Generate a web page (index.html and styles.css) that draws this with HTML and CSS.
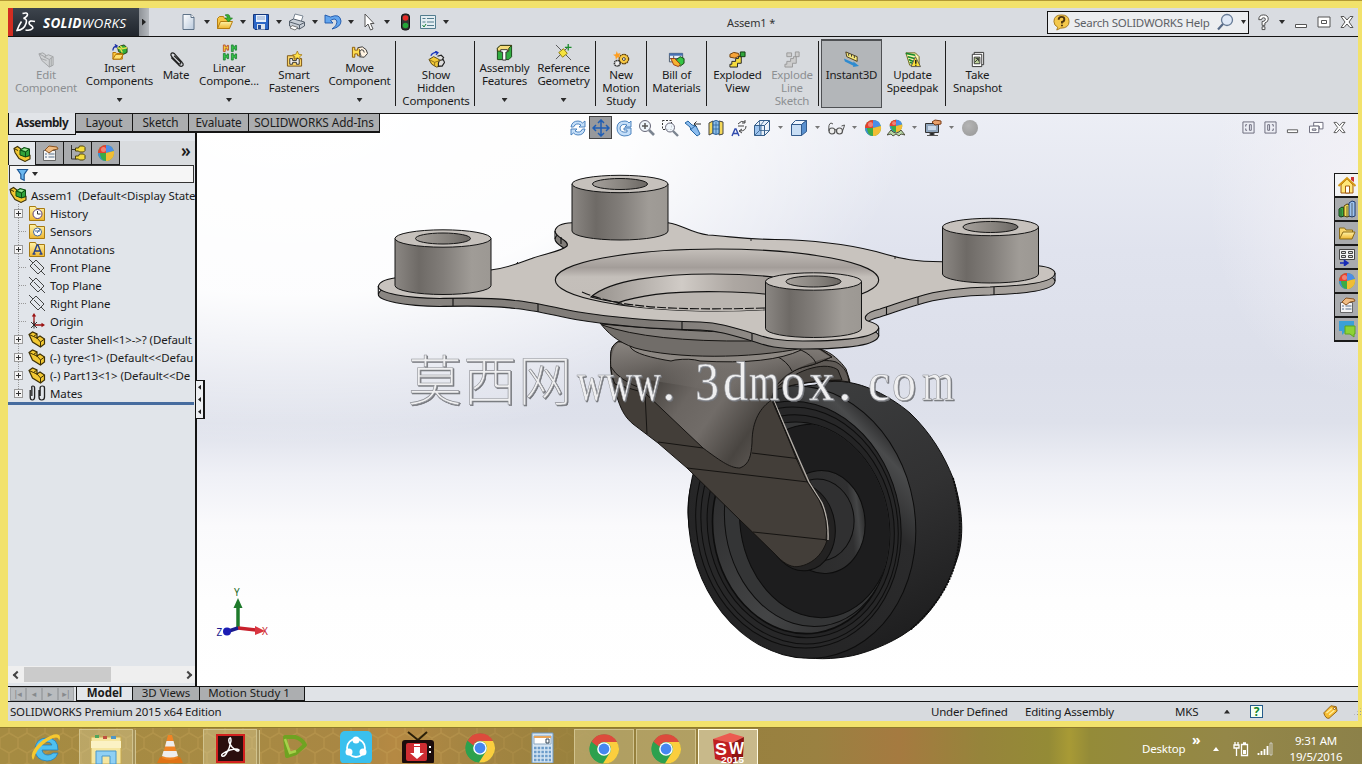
FILE: index.html
```html
<!DOCTYPE html>
<html lang="en">
<head>
<meta charset="utf-8">
<title>Assem1 - SOLIDWORKS</title>
<link rel="stylesheet" href="styles.css">
</head>
<body>
<svg class="defs" width="0" height="0">
  <defs>
    <linearGradient id="paper" x1="0" y1="0" x2="1" y2="1"><stop offset="0" stop-color="#fff"/><stop offset="1" stop-color="#b9c9dc"/></linearGradient>
    <linearGradient id="gold" x1="0" y1="0" x2="0" y2="1"><stop offset="0" stop-color="#fff3a8"/><stop offset="1" stop-color="#eeb52e"/></linearGradient>
    <symbol id="i-new" viewBox="0 0 18 18"><path d="M3 1.500h8l3 3v12H3z" fill="url(#paper)" stroke="#5f7388"/><path d="M11 1.500v3h3" fill="#fff" stroke="#5f7388"/></symbol>
    <symbol id="i-open" viewBox="0 0 18 18"><path d="M1.500 15.500v-10l2-2h4l1 2h5v10z" fill="#f5c543" stroke="#b57d12"/><path d="M1.500 15.500l3-7h12l-3 7z" fill="url(#gold)" stroke="#b57d12"/><path d="M9 2q5-2 5 3h2.500l-4 4-3.500-4h2.500q0-2-2.500-3z" fill="#38b232" stroke="#14721a" stroke-width=".6"/></symbol>
    <symbol id="i-save" viewBox="0 0 18 18"><path d="M1.500 1.500h15v15H3l-1.500-1.500z" fill="#2c67c7" stroke="#16387c"/><path d="M4 2h10v7H4z" fill="#e7f0fc"/><path d="M5 4h8M5 6h8" stroke="#8ea8cf"/><path d="M5 11h8v5.500H5z" fill="#dce3ec"/><path d="M6 12h3v4H6z" fill="#234b95"/></symbol>
    <symbol id="i-print" viewBox="0 0 18 18"><path d="M5 7l2-6 8 2-2 6z" fill="#fff" stroke="#7b8794"/><path d="M1.500 8l4-2 11 3v4l-5 3-10-3z" fill="#c8ced6" stroke="#555f6b"/><path d="M2 9l9.500 3 5-2.500M11.500 12v4" stroke="#555f6b" fill="none"/><path d="M4 12.500l6 2-3 2.500-5-2z" fill="#fff" stroke="#777"/></symbol>
    <symbol id="i-undo" viewBox="0 0 18 18"><path d="M1 2v8h8L6.500 7.500Q12 4 13 9q0 4-5 7 9-2 9-8-1-8-10.500-4z" fill="#62a5ee" stroke="#1d55a8" stroke-width=".9"/></symbol>
    <symbol id="i-cursor" viewBox="0 0 18 18"><path d="M5 1v13l3-3 2.500 6 2.500-1-2.500-5.500H14z" fill="#fff" stroke="#555"/></symbol>
    <symbol id="i-light" viewBox="0 0 18 18"><rect x="5.500" y="1" width="8" height="16" rx="3" fill="#333" stroke="#111"/><circle cx="9.500" cy="5" r="2.800" fill="#e52c27"/><circle cx="9.500" cy="12.500" r="2.800" fill="#25a438"/></symbol>
    <symbol id="i-list" viewBox="0 0 18 18"><path d="M1.500 2.500h15v13h-15z" fill="#e4eef2" stroke="#527c8e"/><path d="M8 5.500h7M8 9h7M8 12.500h7M3.500 5.500h3M3.500 9h3" stroke="#527c8e"/><path d="M3.500 12l1.500 2 2-3" stroke="#168337" fill="none"/></symbol>
    <symbol id="i-help" viewBox="0 0 18 18"><path d="M4 6q0-5 5-5t5 4.500q0 3-3.500 4V12h-3V8q3.500 0 3.500-2.500Q11 4 9 4T7 6zM7.500 13.500h3v3h-3z" fill="#fff" stroke="#444"/></symbol>
    <symbol id="i-ball" viewBox="0 0 18 18"><circle cx="9" cy="9" r="8" fill="#47a94a"/><path d="M9 9V1a8 8 0 0 1 7.800 6z" fill="#4b8de8"/><path d="M9 9V1a8 8 0 0 0-8 8z" fill="#e6402f"/><path d="M9 9H1a8 8 0 0 0 8 8z" fill="#3a8fd8"/><path d="M9 9l7.800-2A8 8 0 0 1 9 17z" fill="#f1bd34"/><path d="M9 9H3q0 7 6 8z" fill="#3dab45"/><circle cx="6.500" cy="5.500" r="2.500" fill="#fff" opacity=".35"/></symbol>
    <symbol id="i-asm" viewBox="0 0 18 18"><path d="M1 3.500L4.500 1.500 8 4v5l4 2.500 5-1v3.500l-5 2.500-6-3-4-6z" fill="#f2c832" stroke="#3c2f05" stroke-width="1.100"/><path d="M7 5L11 2.500l5.500 1.500v6.500L12.500 12 7 10z" fill="#2fa23a" stroke="#0d4a14"/><path d="M7 5l5.500 2 4-3M12.500 7v5" stroke="#0d4a14" fill="none"/><path d="M9 4.700l2.500-1.300 3.500 1-2.500 1.500z" fill="#a6e79b"/><path d="M1 3.500l4 2" stroke="#3c2f05"/></symbol>
    <symbol id="i-edit" viewBox="0 0 18 18"><path d="M1 3l4-1 3 2v5l3 3" fill="#d0d2d4" stroke="#a2a4a6"/><path d="M1 3l3 7 8 7 4-2V6l-5-2-4 2z" fill="#d0d2d4" stroke="#a2a4a6"/><path d="M12 17V9L6 6M12 9l4-3M14 7v9M3 8l6 2" fill="none" stroke="#a2a4a6"/></symbol>
    <symbol id="i-insert" viewBox="0 0 18 18"><path d="M7 4l3-2 4-1 3 3v5l-4 2-5-3z" fill="#31ae3a" stroke="#223d10"/><path d="M7 4l3 1 2 4M10 2l2 3 5-1" stroke="#e7e14a" fill="none" stroke-width="1.500"/><path d="M2 16V9h3l1 1h6v6z" fill="#ffc83c" stroke="#b07000"/><path d="M2 16l3-5h8l-3 5z" fill="#ffe071" stroke="#b07000"/><path d="M2 7q0-4 4-5M4 .500L6.500 2 5 4" stroke="#1c30a5" fill="none" stroke-width="1.300"/></symbol>
    <symbol id="i-clip" viewBox="0 0 18 18"><path d="M3.500 7l8 8q3 2.500 4.500 0 .5-1.500-1-3L7 3Q4.500 1 3.200 3q-.8 1.500 1 3.300l7 7q1.500 1 2.200 0 .5-1-.6-2L6.500 5" fill="none" stroke="#222" stroke-width="1.300"/></symbol>
    <symbol id="i-linear" viewBox="0 0 18 18"><path d="M2.500 1h2v2h2V1.500h1.500v5H6.500V5h-2v3h-2z" fill="#f5d93a" stroke="#b1361d" stroke-width=".8"/><path d="M11 1h2v2h2V1.500h1.500v5H15V5h-2v3h-2zM2.500 10h2v2h2v-1.500h1.500v5H6.500V14h-2v3h-2zM11 10h2v2h2v-1.500h1.500v5H15V14h-2v3h-2z" fill="#35c546" stroke="#127a2b" stroke-width=".8"/></symbol>
    <symbol id="i-smart" viewBox="0 0 18 18"><path d="M1.500 5h7v3h8v8h-15z" fill="#fbd669" stroke="#7b5411"/><path d="M4 8h3v2h4V8h3v6h-3v-2H7v2H4z" fill="#eee" stroke="#333"/><path d="M12 0l1.500 3.500L17 4l-2.500 2 .5 3-3-2-3 2 .5-3L7 4l3.500-.5z" fill="#ffe34a" stroke="#9c6a09" stroke-width=".7"/></symbol>
    <symbol id="i-move" viewBox="0 0 18 18"><path d="M1.500 3.500h2.500v3h3v-2h2v8H7v-2H4v3.500H1.500z" fill="#fddc4f" stroke="#8b5a0a"/><path d="M7 4l5-1 4 3 1.500 4-3.500 4-5-.5q3-1.500 1-2.500Q8 8 11 6q3 0 3 3" fill="#fff3e2" stroke="#333"/></symbol>
    <symbol id="i-show" viewBox="0 0 18 18"><path d="M1 9l5-3 4 2 3 2v6l-4 1-5-3z" fill="#f3cb38" stroke="#59450c"/><path d="M10 5.500l4-1 2.500 2.500-2 3M12 10l4-1 1.500 3-2.500 4-4 0v-3z" fill="#ddd" stroke="#222" stroke-width="1.200"/><path d="M3 5q2-4 7-3.500M7.500 0l3 1.800L8.500 4" stroke="#1c37ba" stroke-width="1.400" fill="none"/><path d="M1 9l6 3 6-2M7 12v4" stroke="#8c6d16" fill="none"/></symbol>
    <symbol id="i-feat" viewBox="0 0 18 18"><path d="M1.500 4.500l3-3h12v12l-3 3h-12z" fill="#31ad41" stroke="#174617"/><path d="M1.500 4.500l3-3h12l-3 3v3h-12z" fill="#f4dc7a" stroke="#3b3710"/><path d="M5 6h7v2.500h-1.500V17H7V8.500H5z" fill="#fff" stroke="#333"/></symbol>
    <symbol id="i-ref" viewBox="0 0 18 18"><path d="M1 1l16 16M1 16L14 3" stroke="#333" stroke-width=".8"/><path d="M4 9l5-4 4 5-5 4z" fill="#f5e33d" stroke="#8d7a0c"/><path d="M14 0v7M10.500 3.500h7" stroke="#1b8c2c" stroke-width="1.400"/></symbol>
    <symbol id="i-motion" viewBox="0 0 18 18"><circle cx="11.500" cy="8.500" r="5" fill="#f8c945" stroke="#5e3f06" stroke-width="1.400" stroke-dasharray="2 .6"/><circle cx="4.500" cy="13" r="3" fill="#eee" stroke="#333" stroke-width="1.600" stroke-dasharray="1.500 .5"/><circle cx="11.500" cy="8.500" r="1.500" fill="#fff" stroke="#333"/><path d="M4 0l1 3 3-1-1.500 3L8 7l-3-.5L3 9l-.5-3.500L0 4l3-.5z" fill="#ff9e1f"/></symbol>
    <symbol id="i-bom" viewBox="0 0 18 18"><path d="M1.500 2.500h14v9h-14z" fill="#e7eef7" stroke="#456"/><path d="M1.500 2.500h14v2.500h-14z" fill="#4871b3"/><path d="M2 8h13M6 5v7" stroke="#456"/><path d="M9 9l4-3 4 2v5l-4 3-4-2z" fill="#35c545" stroke="#173f12"/><path d="M3 8l4 0 6 6-2 2.500-5-2z" fill="#f5b22f" stroke="#9b3813"/></symbol>
    <symbol id="i-expl" viewBox="0 0 18 18"><path d="M1 3.500l4-2 5 1 1 3-5 2-5-1z" fill="#f6a338" stroke="#6d3d05"/><path d="M3 11h4V8h3V6h3v7H9v4H1v-3h2z" fill="#f5dc3e" stroke="#222"/><path d="M12 1h5v5h-5z" fill="#2fa63a" stroke="#123c10"/></symbol>
    <symbol id="i-expg" viewBox="0 0 18 18"><path d="M3 2h5v4H3zM12 1h4v5h-4zM3 11h4V8h3V6h3v7H9v4H1v-3h2z" fill="#ccc" stroke="#999"/></symbol>
    <symbol id="i-inst" viewBox="0 0 18 18"><path d="M3 1l12 5v5L4 6z" fill="#f7ea7d" stroke="#4b3a18"/><path d="M6 2.500v2.500M9 3.500V6M12 5v2.500" stroke="#333"/><path d="M1 8l10 4.500 0-1.500 6 5-6.500 1 .5-1.500L2 11z" fill="#2e8bd0"/></symbol>
    <symbol id="i-upd" viewBox="0 0 18 18"><path d="M2 2h10l4 4v9H6z" fill="#fff6ac" stroke="#6a6417"/><path d="M2 2.500l10 2M4 6l7 2M5 9l5 2M6 12l3 1" stroke="#178a2d" stroke-width="1.700"/><path d="M12 6l5.500 10.500h-10z" fill="#f9e13b" stroke="#555"/><path d="M12.500 9.500v4M12.500 14.500v1" stroke="#111" stroke-width="1.500"/></symbol>
    <symbol id="i-snap" viewBox="0 0 18 18"><path d="M5.500 1.500h10v13h-10z" fill="#fff" stroke="#333"/><path d="M3.500 3.500h10v13h-10z" fill="#fff" stroke="#333"/><path d="M5.500 6.500h6v7h-6z" fill="#c1d69d" stroke="#333"/><path d="M6 12l4-4M7 8h3v3" stroke="#333" fill="none"/></symbol>
    <symbol id="i-filter" viewBox="0 0 18 18"><path d="M3 3h12l-4 6v7l-4-2V9z" fill="#6bb8f0" stroke="#1c5593" stroke-width="1.400"/></symbol>
    <symbol id="i-prop" viewBox="0 0 18 18"><path d="M2.500 6.500h12v10h-12z" fill="#f4f4f4" stroke="#666"/><path d="M4 10h2M4 13h2M7.500 10h6M7.500 13h6" stroke="#57718c"/><path d="M4 6l4-4 8 1 1 2-5 1-4 3z" fill="#f0bd83" stroke="#8b5421"/></symbol>
    <symbol id="i-conf" viewBox="0 0 18 18"><path d="M2.500 1v14h5M2.500 5.500h5" stroke="#333" fill="none"/><path d="M6.500 4h3l1-2h4l1.500 1.500v3L14.500 8h-4l-1-1h-3zM6.500 12h3l1-2h4l1.500 1.500v3L14.500 16h-4l-1-1h-3z" fill="#f5dc3e" stroke="#4c420a"/></symbol>
    <symbol id="i-fold" viewBox="0 0 18 18"><path d="M1.500 2.500h6l1 2h8v12h-15z" fill="url(#gold)" stroke="#a77a12"/></symbol>
    <symbol id="i-folder" viewBox="0 0 18 18"><path d="M1.500 15v-11h5l1.500 2h6.500v3" fill="#f9d66b" stroke="#8a6a14"/><path d="M1.500 15l3.500-7h12l-3 7z" fill="url(#gold)" stroke="#8a6a14"/></symbol>
    <symbol id="i-hist" viewBox="0 0 18 18"><use href="#i-fold"/><circle cx="9.500" cy="10" r="4.500" fill="#fff" stroke="#5a3d7c"/><path d="M9.500 7v3h3" stroke="#333" fill="none"/></symbol>
    <symbol id="i-sens" viewBox="0 0 18 18"><use href="#i-fold"/><circle cx="9.500" cy="10" r="4" fill="#fff" stroke="#44689b"/><path d="M7 9h5M9 11l3-4" stroke="#44689b"/></symbol>
    <symbol id="i-anno" viewBox="0 0 18 18"><use href="#i-fold"/><path d="M5.500 14L9 5h1l3.500 9M7 11h5M4.500 14h3M11.500 14h3" stroke="#26418c" fill="none" stroke-width="1.400"/></symbol>
    <symbol id="i-plane" viewBox="0 0 18 18"><path d="M2 8l6-6 8 8-6 6zM1 1l4 4M13 13l4 4M6 6l6 6" fill="none" stroke="#333" stroke-width=".9"/></symbol>
    <symbol id="i-orig" viewBox="0 0 18 18"><path d="M6 13V3M6 13h9" stroke="#9a1111" stroke-width="1.300"/><path d="M6 1L3.800 4.500h4.400zM17 13l-3.500-2.200v4.400z" fill="#9a1111"/><path d="M3 10l6 6M9 10l-6 6M6 9.500v7" stroke="#222" stroke-width=".9"/></symbol>
    <symbol id="i-part" viewBox="0 0 18 18"><path d="M1 4.500L4.500 2l4.500 2v4l3-2 4.500 3v5l-4 3L4.500 12z" fill="#f2c832" stroke="#3f3105" stroke-width="1.200"/><path d="M1 4.500l4.500 2L9 4M5.500 6.500L9 8l3.500 4 4-3M12.500 12v5" fill="none" stroke="#3f3105"/></symbol>
    <symbol id="i-mates" viewBox="0 0 18 18"><path d="M2 6v7q0 3 2 3t2-3V4q0-2-1.500-2T3.500 4v8M10 6v7q0 3 2.500 3t2.500-3V4q0-2-2-2t-2 2v8" transform="scale(1.100 1)" fill="none" stroke="#222" stroke-width="1.200"/></symbol>
    <symbol id="i-refresh" viewBox="0 0 18 18"><path d="M2 8q1-6 7-6 3 0 4.500 2L16 2v6h-6l2-2Q7 3 4.500 8zM16 10q-1 6-7 6-3 0-4.500-2L2 16v-6h6l-2 2q5 3 7.500-2z" fill="#c4def8" stroke="#3e79b9" stroke-width=".9"/></symbol>
    <symbol id="i-pan" viewBox="0 0 18 18"><path d="M9 1v16M1 9h16M6 4l3-3 3 3M6 14l3 3 3-3M4 6L1 9l3 3M14 6l3 3-3 3" fill="none" stroke="#1f5eb4" stroke-width="1.500"/></symbol>
    <symbol id="i-rot" viewBox="0 0 18 18"><path d="M9 17q-7-1-7-8t8-7q3 0 4 2l2-2v6h-6l2-2Q6 4 5 9q0 5 7 4v-2H9V9h7v6q-2 2-7 2z" fill="#c4def8" stroke="#3e79b9" stroke-width=".9"/></symbol>
    <symbol id="i-zoom" viewBox="0 0 18 18"><circle cx="7" cy="7" r="5.500" fill="#eef5fb" stroke="#667"/><path d="M11 11l5 5" stroke="#7b8490" stroke-width="2.600"/><path d="M7 4v6M4 7h6" stroke="#555" stroke-width="1.500"/></symbol>
    <symbol id="i-zoomr" viewBox="0 0 18 18"><path d="M1.500 1.500h9v9h-9z" fill="none" stroke="#333" stroke-dasharray="2 1.500"/><circle cx="9" cy="8.500" r="4.500" fill="#eef5fb" fill-opacity=".8" stroke="#667"/><path d="M12 12l5 5" stroke="#7b8490" stroke-width="2.400"/></symbol>
    <symbol id="i-prev" viewBox="0 0 18 18"><path d="M1 4l3-2 4 4 4 1 4 8-3 2-6-6-1-3z" fill="#8cbdf0" stroke="#2667a5"/><path d="M6 11l5-4" stroke="#2667a5"/><path d="M17 5h-7M12.500 2.500L10 5l2.500 2.500" stroke="#333" fill="none"/></symbol>
    <symbol id="i-sect" viewBox="0 0 18 18"><path d="M2 4l4-2v12l-4 2zM12 2l4 1v12l-4 1z" fill="#f5d95a" stroke="#444"/><path d="M6 2.500q3-2 6 0v12q-3 2-6 0z" fill="#8fbfe9" stroke="#245c96"/><path d="M9 3v12M6 6h6M6 10h6" stroke="#245c96" stroke-width=".7"/></symbol>
    <symbol id="i-aview" viewBox="0 0 18 18"><path d="M2 17l3-7h1l3 7M3 14.500h5" stroke="#304bad" fill="none" stroke-width="1.400"/><path d="M8 5q3-4 7-2M15 1v3h-3M16 7q0 5-6 5M12 10l-3 2 3 2M8 7h6" fill="none" stroke="#444"/></symbol>
    <symbol id="i-cubew" viewBox="0 0 18 18"><path d="M1.500 6.500h10v10h-10zM1.500 6.500l5-5h10l-5 5M16.500 1.500v10l-5 5" fill="#e7f0fa" stroke="#345e8a"/><path d="M2 7h6v9H2z" fill="#9cc3ee"/><path d="M6.500 1.500v10h10M6.500 11.500l-5 5M8 7v9M11 2l-4 5" fill="none" stroke="#345e8a" stroke-width=".8"/></symbol>
    <symbol id="i-cube" viewBox="0 0 18 18"><path d="M1.500 5.500h10v11h-10z" fill="#c8def5" stroke="#335b8d"/><path d="M1.500 5.500l4-4h11l-5 4z" fill="#eef6ff" stroke="#335b8d"/><path d="M16.500 1.500v11l-5 4v-11z" fill="#5990cf" stroke="#335b8d"/></symbol>
    <symbol id="i-glass" viewBox="0 0 18 18"><circle cx="5" cy="12" r="3" fill="#eee" stroke="#555" stroke-width="1.200"/><circle cx="12.500" cy="12" r="3" fill="#eee" stroke="#555" stroke-width="1.200"/><path d="M2 12Q1 5 4 4l2 1M15.500 12q2-5 2-6l-3 1M8 11q1-1 2 0" stroke="#555" fill="none"/></symbol>
    <symbol id="i-scene" viewBox="0 0 18 18"><use href="#i-ball" x="2" y="0" width="14" height="14"/><path d="M0 16l4-5 2 2 3 1 3-1 2-2 4 5-4-1-2 2-3-2-3 2-2-2z" fill="#b7d6a5" stroke="#443" stroke-width=".9"/></symbol>
    <symbol id="i-mon" viewBox="0 0 18 18"><path d="M1.500 4.500h13v9h-13z" fill="#90a5bc" stroke="#333"/><path d="M4 7h8v4H4z" fill="#c9d8e9"/><path d="M6 14h4v2H6zM3 16.500h11" stroke="#555"/><path d="M8 3l3-2 6 1v3l-6 1z" fill="#e9a16b" stroke="#7c3e18"/></symbol>
    <symbol id="i-home" viewBox="0 0 18 18"><path d="M3 9v8h12V9L9 3z" fill="#ffe77a" stroke="#a35b0d"/><path d="M.500 10L9 2l8.500 8" fill="none" stroke="#d59a17" stroke-width="2"/><path d="M7.500 10h4v7h-4z" fill="#fff" stroke="#a35b0d"/><path d="M13 1h3v5l-3-2z" fill="#c33"/></symbol>
    <symbol id="i-books" viewBox="0 0 18 18"><path d="M1 9l3-2 2 1v8l-3 1-2-1z" fill="#38ac46" stroke="#123e17"/><path d="M6 6l3-2 3 1v11l-3 1-3-1z" fill="#f2dc51" stroke="#59430d"/><path d="M11 3l3-2 3 1v14l-3 1-3-1z" fill="#9cc3f0" stroke="#1d3a6f"/><path d="M3 9v8M9 6v11M14 3v14" stroke="#333" stroke-width=".7"/></symbol>
    <symbol id="i-view" viewBox="0 0 18 18"><path d="M1.500 1.500h15v10h-15z" fill="#f4f4f4" stroke="#444"/><path d="M3.500 3.500h4v2h-4zM3.500 7.500h4v2h-4zM10.500 3.500h4v2h-4zM10.500 7.500h4v2h-4z" fill="#ddd" stroke="#444"/><path d="M2 15h6M6.500 12.500l3.500 2.500-3.500 2.500z" stroke="#172ab7" stroke-width="1.500" fill="#172ab7"/></symbol>
    <symbol id="i-forum" viewBox="0 0 18 18"><path d="M1 1h15v10H8l-4 4v-4H1z" fill="#3ba0d8"/><path d="M7 6h10v8h-1v3l-4-3H7z" fill="#8dd334" stroke="#5da520"/></symbol>
    <symbol id="i-dual" viewBox="0 0 14 14"><path d="M1 1h12v12H1zM5.500 4H4v2M5.500 10H4V8M8 4h2v6H8z" fill="none" stroke="#667" stroke-width="1"/></symbol>
    <symbol id="i-dual2" viewBox="0 0 14 14"><path d="M1 1h12v12H1zM4 4h2v6H4zM8.500 4H10v2M8.500 10H10V8" fill="none" stroke="#667" stroke-width="1"/></symbol>
    <symbol id="i-min" viewBox="0 0 14 14"><path d="M1.500 9.500h11v3h-11z" fill="#fff" stroke="#555"/></symbol>
    <symbol id="i-max" viewBox="0 0 14 14"><path d="M1 2h12v10H1zM4.500 5.500h5v3h-5z" fill="#fff" stroke="#555"/></symbol>
    <symbol id="i-rest" viewBox="0 0 16 14"><path d="M5.500 1.500h10v7h-4v-3h-6z" fill="#fff" stroke="#667"/><path d="M1 5.500h10v7H1zM4 8.500h4v1.500H4z" fill="#fff" stroke="#667"/></symbol>
    <symbol id="i-close" viewBox="0 0 14 14"><path d="M1 1.500h3l3 3.500 3-3.500h3L9 7l4 5.500h-3L7 9l-3 3.500H1L5 7z" fill="#fff" stroke="#555"/></symbol>
    <symbol id="t-chrome" viewBox="0 0 30 30"><circle cx="15" cy="15" r="14.500" fill="#2da14e"/><path d="M2.500 7.700A14.500 14.500 0 0 1 28 8H15a7 7 0 0 0-6.500 4.500z" fill="#dd4b3c"/><path d="M2.500 7.700L9 18a7 7 0 0 0 6 4l-3.500 7A14.500 14.500 0 0 1 2.500 7.700z" fill="#2da14e"/><path d="M28 8H15q7 1 7 7 0 3-2 5l-6 9.500A14.500 14.500 0 0 0 28 8z" fill="#fbce3e"/><circle cx="15" cy="15" r="6.800" fill="#fff"/><circle cx="15" cy="15" r="5.400" fill="#4587f0"/></symbol>
  </defs>
</svg>

<div class="window">
  <header class="titlebar">
    <div class="brand">
      <svg class="brand-mark" viewBox="0 0 20 21"><path d="M6.500 1.500q5-1.500 5 1 0 2-4 4 4 0 2.500 5Q8 18 1 18.500 3 13 5.500 9.500M19 9.500q-6-1.500-6 1.500 0 1.500 2 2.500 2.500 1.500 1.500 3-2 2.500-7 1.500" fill="none" stroke="#fff" stroke-width="1.600"/></svg>
      <span class="brand-text"><b>SOLID</b>WORKS</span>
    </div>
    <div class="brand-arrow"><i class="right"></i></div>
    <nav class="quick">
      <span><svg><use href="#i-new"/></svg><i class="down"></i></span>
      <span><svg><use href="#i-open"/></svg><i class="down"></i></span>
      <span><svg><use href="#i-save"/></svg><i class="down"></i></span>
      <span><svg><use href="#i-print"/></svg><i class="down"></i></span>
      <span><svg><use href="#i-undo"/></svg><i class="down"></i></span>
      <span><svg><use href="#i-cursor"/></svg><i class="down"></i></span>
      <span class="tight"><svg><use href="#i-light"/></svg></span>
      <span><svg><use href="#i-list"/></svg><i class="down"></i></span>
    </nav>
    <div class="doc-title">Assem1 *</div>
    <div class="search">
      <svg class="bubble" viewBox="0 0 18 18"><path d="M9 1q8 0 8 7t-9 7l-4 2 1-3Q1 12 1 8q0-7 8-7z" fill="#f4c84b" stroke="#a5781b"/><path d="M6 6q0-3 3-3t3 2.500Q12 8 9.500 8.500V10M9.500 11.500V13" fill="none" stroke="#4d3510" stroke-width="2"/></svg>
      <span>Search SOLIDWORKS Help</span>
      <svg class="lens" viewBox="0 0 18 18"><circle cx="11" cy="7" r="5.500" fill="#dfe9f7" stroke="#667b96" stroke-width="1.300"/><path d="M7 11l-5 5.500" stroke="#566a87" stroke-width="2.200"/></svg>
      <i class="down"></i>
    </div>
    <div class="sysbtns">
      <svg class="q"><use href="#i-help"/></svg><i class="down"></i>
      <svg><use href="#i-min"/></svg><svg><use href="#i-max"/></svg><svg><use href="#i-close"/></svg>
    </div>
  </header>

  <section class="ribbon">
    <div class="cmd off"><svg><use href="#i-edit"/></svg>Edit<br>Component</div>
    <div class="cmd drop"><svg><use href="#i-insert"/></svg>Insert<br>Components<i class="down"></i></div>
    <div class="cmd"><svg><use href="#i-clip"/></svg>Mate</div>
    <div class="cmd drop"><svg><use href="#i-linear"/></svg>Linear<br>Compone...<i class="down"></i></div>
    <div class="cmd"><svg><use href="#i-smart"/></svg>Smart<br>Fasteners</div>
    <div class="cmd drop"><svg><use href="#i-move"/></svg>Move<br>Component<i class="down"></i></div>
    <div class="sep"></div>
    <div class="cmd"><svg><use href="#i-show"/></svg>Show<br>Hidden<br>Components</div>
    <div class="sep"></div>
    <div class="cmd drop"><svg><use href="#i-feat"/></svg>Assembly<br>Features<i class="down"></i></div>
    <div class="cmd drop"><svg><use href="#i-ref"/></svg>Reference<br>Geometry<i class="down"></i></div>
    <div class="sep"></div>
    <div class="cmd"><svg><use href="#i-motion"/></svg>New<br>Motion<br>Study</div>
    <div class="sep"></div>
    <div class="cmd"><svg><use href="#i-bom"/></svg>Bill of<br>Materials</div>
    <div class="sep"></div>
    <div class="cmd"><svg><use href="#i-expl"/></svg>Exploded<br>View</div>
    <div class="cmd off"><svg><use href="#i-expg"/></svg>Explode<br>Line<br>Sketch</div>
    <div class="sep"></div>
    <div class="cmd pressed"><svg><use href="#i-inst"/></svg>Instant3D</div>
    <div class="cmd"><svg><use href="#i-upd"/></svg>Update<br>Speedpak</div>
    <div class="sep"></div>
    <div class="cmd"><svg><use href="#i-snap"/></svg>Take<br>Snapshot</div>
  </section>

  <main class="work">
    <div class="cmd-tabs">
      <span class="active">Assembly</span><span>Layout</span><span>Sketch</span><span>Evaluate</span><span>SOLIDWORKS Add-Ins</span>
    </div>

    <aside class="panel">
      <div class="panel-tabs">
        <span class="active"><svg><use href="#i-asm"/></svg></span><span><svg><use href="#i-prop"/></svg></span><span><svg><use href="#i-conf"/></svg></span><span><svg><use href="#i-ball"/></svg></span>
        <b>»</b>
      </div>
      <div class="filter"><svg><use href="#i-filter"/></svg><i class="down"></i></div>
      <div class="root"><svg><use href="#i-asm"/></svg>Assem1&nbsp; (Default&lt;Display State</div>
      <ul class="tree">
        <li class="plus"><svg><use href="#i-hist"/></svg>History</li>
        <li><svg><use href="#i-sens"/></svg>Sensors</li>
        <li class="plus"><svg><use href="#i-anno"/></svg>Annotations</li>
        <li><svg><use href="#i-plane"/></svg>Front Plane</li>
        <li><svg><use href="#i-plane"/></svg>Top Plane</li>
        <li><svg><use href="#i-plane"/></svg>Right Plane</li>
        <li><svg><use href="#i-orig"/></svg>Origin</li>
        <li class="plus"><svg><use href="#i-part"/></svg>Caster Shell&lt;1&gt;-&gt;? (Default</li>
        <li class="plus"><svg><use href="#i-part"/></svg>(-) tyre&lt;1&gt; (Default&lt;&lt;Defau</li>
        <li class="plus"><svg><use href="#i-part"/></svg>(-) Part13&lt;1&gt; (Default&lt;&lt;De</li>
        <li class="plus"><svg><use href="#i-mates"/></svg>Mates</li>
      </ul>
      <div class="rollback"></div>
      <div class="hscroll"><i class="chev l"></i><div class="thumb"></div><i class="chev r"></i></div>
    </aside>

    <div class="viewport">
      <svg class="scene" viewBox="197 114 1161 572">
        <defs>
          <linearGradient id="cyl" x1="0" x2="1" y1="0" y2="0"><stop offset="0" stop-color="#8b8783"/><stop offset=".25" stop-color="#6e6a66"/><stop offset=".5" stop-color="#817d79"/><stop offset=".8" stop-color="#a09c97"/><stop offset="1" stop-color="#9c9893"/></linearGradient>
          <linearGradient id="hole" x1="0" x2="1" y1="0" y2="0"><stop offset="0" stop-color="#a5a09b"/><stop offset=".6" stop-color="#85817c"/><stop offset="1" stop-color="#6b6763"/></linearGradient>
          <linearGradient id="dish" x1="0" x2="0" y1="0" y2="1"><stop offset="0" stop-color="#c4bfba"/><stop offset=".3" stop-color="#a39d99"/><stop offset=".45" stop-color="#c4bfba"/><stop offset="1" stop-color="#c2bdb8"/></linearGradient>
          <linearGradient id="dish2" x1="0" x2="1" y1="0" y2="0"><stop offset="0" stop-color="#96918c"/><stop offset=".35" stop-color="#d0cbc6"/><stop offset=".55" stop-color="#ada7a2"/><stop offset="1" stop-color="#88837f"/></linearGradient>
          <linearGradient id="side" x1="0" x2="1" y1="0" y2="0"><stop offset="0" stop-color="#8a8682"/><stop offset=".4" stop-color="#7d7975"/><stop offset=".7" stop-color="#a09b97"/><stop offset="1" stop-color="#a7a29d"/></linearGradient>
          <linearGradient id="fork" x1="610" x2="775" y1="350" y2="465" gradientUnits="userSpaceOnUse"><stop offset="0" stop-color="#6c6763"/><stop offset=".25" stop-color="#45413d"/><stop offset=".45" stop-color="#6b6662"/><stop offset=".6" stop-color="#716c68"/><stop offset=".8" stop-color="#494541"/><stop offset=".92" stop-color="#5c5753"/><stop offset="1" stop-color="#45413d"/></linearGradient>
          <linearGradient id="shoulder" x1="0" x2="0" y1="340" y2="400" gradientUnits="userSpaceOnUse"><stop offset="0" stop-color="#8c8782"/><stop offset=".5" stop-color="#77726e" stop-opacity=".6"/><stop offset="1" stop-color="#77726e" stop-opacity="0"/></linearGradient>
          <linearGradient id="tread" x1="840" x2="950" y1="390" y2="610" gradientUnits="userSpaceOnUse"><stop offset="0" stop-color="#3b3c3d"/><stop offset=".5" stop-color="#313132"/><stop offset="1" stop-color="#1f1f20"/></linearGradient>
          <linearGradient id="tyre" x1="700" x2="910" y1="600" y2="460" gradientUnits="userSpaceOnUse"><stop offset="0" stop-color="#232324"/><stop offset=".75" stop-color="#2b2b2c"/><stop offset=".93" stop-color="#4a4b4c"/><stop offset="1" stop-color="#2d2d2e"/></linearGradient>
          <linearGradient id="rim" x1="700" x2="850" y1="480" y2="640" gradientUnits="userSpaceOnUse"><stop offset="0" stop-color="#2c2c2d"/><stop offset=".6" stop-color="#444546"/><stop offset="1" stop-color="#2a2a2b"/></linearGradient>
          <linearGradient id="hub" x1="790" x2="866" y1="0" y2="0" gradientUnits="userSpaceOnUse"><stop offset="0" stop-color="#2a2a2a"/><stop offset=".8" stop-color="#303031"/><stop offset=".9" stop-color="#454647"/><stop offset="1" stop-color="#2a2a2a"/></linearGradient>
          <clipPath id="ringclip"><ellipse cx="717" cy="280" rx="161.700" ry="31"/></clipPath>
          <clipPath id="rimclip"><ellipse cx="801" cy="528" rx="88" ry="106" transform="rotate(-9 801 528)"/></clipPath>
          <path id="plate" d="M378.300 286.500C379 281 387 279 395.700 277.700L490.700 270C508 268 520 263 533 258C548 253 562 251 567 246C570 240 555 238 555 231C556 225 565 223 572 222.700L668 222.700C684 225 690 233 708 235C735 237 745 239 775 239.500C812 240 850 245 876 251.500C905 260 915 261.500 942.700 261.700L1038 265.700C1050 267 1055 270 1055 273.500C1053 283 1025 285.500 990 287C965 287 935 291 918 296.700C902 301 893 305 880 309C862 313 864 320 868 321C875 323 879 325 878.700 328C876 338 840 341 803 341C770 341 763 336 751.700 333C735 328 722 323 700 322C655 321 610 317 577 311.700C556 308 535 302 515 300.500C490 297 460 298 440 298.500C405 298 378 293 378.300 286.500Z"/>
          <g id="boss" stroke="#141414">
            <path d="M0 8.500V55.500A48 9 0 0 0 96 55.500V8.500Z" fill="url(#cyl)"/>
            <ellipse cx="48" cy="8.500" rx="48" ry="8.700" fill="#c6c1bc"/>
            <ellipse cx="48" cy="8.500" rx="27.500" ry="5.500" fill="url(#hole)"/>
          </g>
        </defs>

        <g stroke="#0d0d0d" stroke-width="1">
          <path d="M815 385C850 372 890 396 910 413C930 432 944 455 953 478C965 515 964 545 954 567C945 593 928 617 910 630C890 645 860 655 846.700 656.700C800 664 775 650 757 635C735 615 710 590 700 563C686 530 685 505 693 478C720 420 770 388 815 385Z" fill="url(#tread)"/>
          <path d="M953 478Q966 525 954 567Q944 600 910 630" fill="none" stroke-width="1.800" stroke-dasharray="2 1"/>
          <g transform="rotate(-10 802 522)">
            <ellipse cx="802" cy="522" rx="113" ry="137" fill="url(#tyre)"/>
            <ellipse cx="798" cy="524" rx="102" ry="124" fill="#272728"/>
            <ellipse cx="799" cy="525" rx="98" ry="119" fill="none"/>
            <ellipse cx="800" cy="526" rx="93" ry="112" fill="#242425"/>
          </g>
          <g transform="rotate(-9 801 528)"><ellipse cx="801" cy="528" rx="88" ry="106" fill="url(#rim)" stroke-width="1.600"/></g>
          <g clip-path="url(#rimclip)">
            <ellipse cx="808" cy="522" rx="83" ry="105" transform="rotate(-9 808 522)" fill="#343536"/>
            <ellipse cx="816" cy="521" rx="76" ry="97" transform="rotate(-8 816 521)" fill="#1d1d1e"/>
          </g>
          <ellipse cx="823" cy="522" rx="42" ry="51.500" fill="url(#hub)" transform="rotate(-6 823 522)"/>
          <ellipse cx="818" cy="520" rx="36" ry="41" fill="#303031" transform="rotate(-6 818 520)"/>
          <ellipse cx="801" cy="527" rx="34" ry="44" fill="#232222" transform="rotate(-9 801 527)"/>
        </g>

        <g stroke="#161412" stroke-width="1" fill="none">
          <path d="M780 352L820 349C832 352 841 362 846 369L850 381.500C825 380 800 382 774 390Z" fill="#77726e"/>
          <path d="M774 388C795 365 820 357 836 362C845 367 848 374 849 382C830 378 800 382 774 390Z" fill="#5f5a56"/>
          <path d="M774 390C800 366 828 362 838 370L842 380C825 380 800 382 774 390Z" fill="#494541"/>
          <path d="M618 341.700C612 345 610.700 350 610.700 356C610 375 613 388 618 400C622 412 626 418 633 424L658 443L687 468L740 520L775 554C783 563 790 567 797 566.700C814 565 828 550 828.500 530C828 518 825 512 820 500L797 458L771.700 400C773 385 785 371 808 366C820 363 828 358 832 357L820 349L680 342Z" fill="#433e39"/>
          <path d="M618 341.700C612 345 610.700 350 610.700 356C610 368 612 377 615 384L645 393L703 448C723 463 731 468 740 468C750 464 751 455 752 443C752 420 761 407 771.700 400C773 385 785 371 808 366C820 363 828 358 832 357L820 349L680 342Z" fill="url(#fork)"/>
          <path d="M620 343L818 349L830 357C800 365 780 374 772 395C735 400 650 375 614 378C610 367 610 351 618 343Z" fill="url(#shoulder)" stroke="none"/>
          <path d="M645 393L647 434M658 442L703 448M752 453L797 458.500M687 468L808 482M753 532L828 540M611 367Q618 380 645 390M776 356Q787 361 792 371M801 350Q812 355 816 363"/>
          <path d="M774 401L798 457L809 482L822 503Q829 520 828 540" stroke="#b3aea8" stroke-width="1.400"/>
          <path d="M772 398L796 458L807 481.500L819 500Q829 520 826 541"/>
          <path d="M630 346Q632 354 665 360Q672 362 675 360Q690 358 700 361Q770 365 801 350L790 342Z" fill="#8d8883"/>
          <path d="M600 323C607 332 617 342 635 348C675 359 750 359 803 348L790 334Z" fill="#716d69"/>
          <path d="M602 325Q650 342 751 341V333Q660 330 602 324Z" fill="#827e7a"/>
        </g>

        <g stroke="#111" stroke-width="1.100">
          <use href="#plate" transform="translate(0 8)" fill="url(#side)"/>
          <use href="#plate" fill="#c8c3be"/>
          <path d="M378.300 286V294M1055 273V281M453 298V306M538 304V312M682 322V330M752 333V341M886.500 307V315M918 297V304M994 287V295M555 231V239M878.700 328V336M561 237V244" fill="none"/>
          <ellipse cx="717" cy="280" rx="161.700" ry="31" fill="url(#dish)"/>
          <g clip-path="url(#ringclip)">
            <path d="M591 297C610 280 660 274 712 274C775 274 815 281 850 296C820 312 640 312 591 297Z" fill="url(#dish2)"/>
            <path d="M617 303C645 293 680 291 720 291.700C765 292 790 297 815 304C770 315 650 314 617 303Z" fill="#bab5b0"/>
            <path d="M582 292C615 306 660 311 765 308" fill="none" stroke-dasharray="9 2"/>
          </g>
        </g>
        <path d="M751 238v3M895 256v3M516 264l2-2" stroke="#222"/>
        <use href="#boss" x="395" y="230"/>
        <use href="#boss" x="572" y="175.500"/>
        <use href="#boss" x="942.500" y="218.500"/>
        <use href="#boss" x="765.500" y="273"/>

        <g class="mark">
          <text class="han" x="408" y="401" textLength="164">莫西网</text>
          <text x="577" y="400" textLength="84" lengthAdjust="spacingAndGlyphs">www</text><text x="662" y="400" textLength="13">.</text><text x="695" y="400" textLength="24" lengthAdjust="spacingAndGlyphs">3</text>
          <text x="723" y="400" textLength="25" lengthAdjust="spacingAndGlyphs">d</text><text x="749" y="400" textLength="30" lengthAdjust="spacingAndGlyphs">m</text><text x="781" y="400" textLength="24" lengthAdjust="spacingAndGlyphs">o</text><text x="809" y="400" textLength="25" lengthAdjust="spacingAndGlyphs">x</text><text x="838" y="400" textLength="13">.</text><text x="868" y="400" textLength="22" lengthAdjust="spacingAndGlyphs">c</text><text x="892" y="400" textLength="24" lengthAdjust="spacingAndGlyphs">o</text><text x="922" y="400" textLength="32" lengthAdjust="spacingAndGlyphs">m</text>
        </g>

        <g class="triad">
          <path d="M238 628V608" stroke="#1e7a2b" stroke-width="3.500"/><path d="M238 598l4.500 10h-9z" fill="#1e7a2b"/>
          <path d="M238 628L256 630" stroke="#c8202b" stroke-width="3.500"/><path d="M265 631l-10-5v9z" fill="#d93540"/>
          <path d="M238 628L226 632" stroke="#1b1c8e" stroke-width="3.500"/><circle cx="227" cy="631.500" r="4" fill="#1b1cb4"/>
          <text x="234" y="596" fill="#1f6b2a">Y</text><text x="262" y="635" fill="#c8202b">X</text><text x="216.500" y="636" fill="#1b1c8e">Z</text>
        </g>
      </svg>

      <div class="hud">
        <svg><use href="#i-refresh"/></svg><span class="on"><svg><use href="#i-pan"/></svg></span><svg><use href="#i-rot"/></svg><svg><use href="#i-zoom"/></svg><svg><use href="#i-zoomr"/></svg><svg><use href="#i-prev"/></svg><svg><use href="#i-sect"/></svg><svg><use href="#i-aview"/></svg><svg><use href="#i-cubew"/></svg><i class="down"></i><svg><use href="#i-cube"/></svg><i class="down"></i><svg><use href="#i-glass"/></svg><i class="down"></i><svg><use href="#i-ball"/></svg><svg><use href="#i-scene"/></svg><i class="down"></i><svg><use href="#i-mon"/></svg><i class="down"></i><b class="disc"></b>
      </div>
      <div class="docbtns">
        <svg><use href="#i-dual"/></svg><svg><use href="#i-dual2"/></svg><svg><use href="#i-min"/></svg><svg class="wide"><use href="#i-rest"/></svg><svg><use href="#i-close"/></svg>
      </div>
      <div class="taskpane">
        <span class="active"><svg><use href="#i-home"/></svg></span><span><svg><use href="#i-books"/></svg></span><span><svg><use href="#i-folder"/></svg></span><span><svg><use href="#i-view"/></svg></span><span><svg><use href="#i-ball"/></svg></span><span><svg><use href="#i-prop"/></svg></span><span><svg><use href="#i-forum"/></svg></span>
      </div>
      <div class="handle"><i></i><i></i><i></i></div>
    </div>
  </main>

  <div class="sheet-tabs">
    <div class="nav"><i>|◂</i><i>◂</i><i>▸</i><i>▸|</i></div>
    <span class="active">Model</span><span>3D Views</span><span>Motion Study 1</span>
  </div>

  <footer class="status">
    <span class="edition">SOLIDWORKS Premium 2015 x64 Edition</span>
    <span class="s-def">Under Defined</span>
    <span class="s-edit">Editing Assembly</span>
    <span class="s-mks">MKS</span>
    <i class="up"></i>
    <b class="qbox">?</b>
    <svg class="tag" viewBox="0 0 18 18"><path d="M2 10l8-8 6 1 1 5-9 8q-4 1-6-6z" fill="#f6bd35" stroke="#8c5908"/><path d="M5 10l6-5M8 12l6-5" stroke="#fff0a0" stroke-width="1.500"/><circle cx="14" cy="5" r="1.200" fill="#fff" stroke="#8c5908"/></svg>
    <i class="grip"></i>
  </footer>
</div>

<div class="taskbar">
  <svg class="comb" width="1362" height="36">
    <defs><pattern id="hex" width="18" height="30" patternUnits="userSpaceOnUse"><path d="M9 0v5l9 5v10l-9 5v5M9 5L0 10v10l9 5" fill="none" stroke="#d0ad5c" stroke-opacity=".28" stroke-width="1.500"/></pattern>
    <linearGradient id="fade"><stop offset="0" stop-color="#fff"/><stop offset=".33" stop-color="#fff"/><stop offset=".45" stop-color="#000"/></linearGradient><mask id="m"><rect width="1362" height="36" fill="url(#fade)"/></mask></defs>
    <rect width="1362" height="36" fill="url(#hex)" mask="url(#m)"/>
  </svg>
  <div class="apps">
    <span><svg viewBox="0 0 32 32"><path d="M28 19H12q1 5 6 5 3 0 5-2h5q-3 8-11 8Q5 29 5 18 6 7 17 7q11 0 11 12zm-6-5q-1-3-5-3t-5 3z" fill="#4fc0f0" stroke="#1f7fc0" stroke-width=".8"/><path d="M3 29Q-2 21 13 9 25 1 29 4q2 2 0 6 0-5-6-3Q10 13 5 24q-1 4-2 5z" fill="#f7c92f"/></svg></span>
    <span class="open stack"><svg viewBox="0 0 32 32"><path d="M1 5h30v27H1z" fill="#f5e6a0" stroke="#c7a94e"/><path d="M5 3h4v3H5z" fill="#4fa65c"/><path d="M13 4h4v3h-4z" fill="#c05040"/><path d="M21 4h5v3h-5z" fill="#4f96c6"/><path d="M1 9h30v7H1z" fill="#fbf2c4"/><path d="M6 32V19h20v13h-6v-8h-8v8z" fill="#8fd0f4" stroke="#4b97c9"/></svg></span>
    <span><svg viewBox="0 0 32 32"><path d="M6 26h20l3 6H3z" fill="#e07315"/><path d="M14 4h4l6 23q-8 4-16 0z" fill="#f08424"/><path d="M12.500 10h7l1.500 5.500H11zM9.500 20h13l1.500 5q-8 3-16 0z" fill="#eee"/></svg></span>
    <span class="open stack"><svg viewBox="0 0 32 32"><path d="M3 3h27v27H3z" fill="#2b0f0e" stroke="#d2201e" stroke-width="2"/><path d="M8 24q-2-2 8-6 7-2 9 0-1 3-7-3-4-5-3-8 2-3 2 2-1 7-5 13-2 3-4 2z" fill="none" stroke="#fff" stroke-width="1.500"/></svg></span>
    <span><svg viewBox="0 0 32 32"><path d="M7 6h10q7 2 10 8l-9 8-9 3z" fill="none" stroke="#6fa321" stroke-width="4" stroke-linejoin="round"/><path d="M7 8l5 14 6-2" fill="none" stroke="#a7d04a" stroke-width="2.500"/></svg></span>
    <span><svg viewBox="0 0 32 32"><rect width="32" height="33" rx="5" fill="#3ac0ee"/><circle cx="16" cy="17" r="9" fill="none" stroke="#fff" stroke-width="1.800"/><circle cx="16" cy="9" r="3.500" fill="#fff"/><circle cx="9" cy="21" r="3.500" fill="#fff"/><circle cx="23" cy="21" r="3.500" fill="#fff"/></svg></span>
    <span><svg viewBox="0 0 32 32"><path d="M6 1l10 8 9-8" fill="none" stroke="#2b2009" stroke-width="2"/><rect x="0" y="9" width="32" height="24" rx="3" fill="#1b0c0b"/><rect x="4" y="12" width="21" height="18" rx="2" fill="#cf2d32"/><path d="M12 13h6v2h-6zM12 16h6v6h4l-7 6-7-6h4z" fill="#fff"/><path d="M28 15v2M28 20v2" stroke="#fff" stroke-width="2"/></svg></span>
    <span><svg class="ch"><use href="#t-chrome"/></svg></span>
    <span><svg viewBox="0 0 32 32"><path d="M6 2h21v30H6z" fill="#d5e5f3" stroke="#6c99c3"/><path d="M8 5h17v8H8z" fill="#fff" stroke="#8ba6bf"/><path d="M8 5h17v2H8z" fill="#e7a45a"/><path d="M8 17h17M8 21h17M8 25h17M8 29h17" stroke="#6c9cca" stroke-width="2.500" stroke-dasharray="2.500 1.200"/><path d="M20 8h3v4h-3z" fill="none" stroke="#345"/></svg></span>
    <span class="open"><svg class="ch"><use href="#t-chrome"/></svg></span>
    <span class="open"><svg class="ch"><use href="#t-chrome"/></svg></span>
    <span class="open bright"><svg viewBox="0 0 32 32"><path d="M1 7L18 1l14 4-12 6z" fill="#ec5a50"/><path d="M1 7l19 4v21L3 27z" fill="#c01f20"/><path d="M20 11l12-6-1 20-11 7z" fill="#8d1214"/><text x="3" y="23" class="swt" textLength="12" lengthAdjust="spacingAndGlyphs">S</text><text x="17" y="22" class="swt" textLength="15" lengthAdjust="spacingAndGlyphs">W</text><text x="9" y="30.500" class="swy" textLength="23" lengthAdjust="spacingAndGlyphs">2015</text></svg></span>
  </div>
  <div class="tray">
    <span class="desk">Desktop</span><span class="more">»</span><i class="up"></i>
    <svg class="batt" viewBox="0 0 16 16"><path d="M2 1v3M5 1v3M1 4h5v3H1zM3.500 7v8" stroke="#fff" fill="none" stroke-width="1.300"/><path d="M8.500 3.500h6v11h-6zM10 2h3" fill="none" stroke="#fff" stroke-width="1.300"/><path d="M10 9h3v4h-3z" fill="#fff"/></svg>
    <svg class="sig" viewBox="0 0 16 16"><path d="M1.500 15v-2M4.500 15v-4M7.500 15V9M10.500 15V6" stroke="#fff" stroke-width="1.800"/><path d="M13 3h2v12h-2z" fill="none" stroke="#ddd" stroke-width=".8"/></svg>
    <div class="clock">9:31 AM<br>19/5/2016</div>
  </div>
</div>
</body>
</html>
```
FILE: styles.css
```css
* { box-sizing: border-box; }
body {
  margin: 0;
  width: 1362px;
  height: 764px;
  overflow: hidden;
  display: flex;
  flex-direction: column;
  font: 12px/13px "Noto Sans", "Open Sans", sans-serif;
  color: #1b1b1b;
}
.defs { position: absolute; }
svg { display: block; flex: none; width: 18px; height: 18px; }

.down { display: block; flex: none; width: 6px; height: 4px; background: #2b2b2b; clip-path: polygon(0 0, 100% 0, 50% 100%); }
.up { display: block; flex: none; width: 6px; height: 4px; background: #2b2b2b; clip-path: polygon(50% 0, 100% 100%, 0 100%); }
.right { display: block; width: 4px; height: 7px; background: #222; clip-path: polygon(0 0, 100% 50%, 0 100%); }

.window {
  height: 728px;
  flex: none;
  padding: 7px 4px 7px 8px;
  background: #f2e26c;
  border-top: 1px solid #b39a35;
  border-bottom: 1px solid #8f7a2c;
  display: flex;
  flex-direction: column;
}

/* title bar */
.titlebar { height: 29px; flex: none; display: flex; align-items: center; background: #d9dce1; border-bottom: 1px solid #141414; }
.brand { width: 131px; height: 28px; display: flex; align-items: center; border-left: 5px solid #d22d21; background: linear-gradient(#3d444d, #20252c); padding-left: 3px; }
.brand-mark { width: 20px; height: 21px; }
.brand-text { color: #fff; font: italic 13.500px/15px "Open Sans", sans-serif; letter-spacing: .25px; margin: 3px 0 0 7px; white-space: nowrap; }
.brand-arrow { width: 10px; height: 28px; background: linear-gradient(90deg, #8e9297, #b6babf); display: flex; align-items: center; justify-content: center; }
.quick { display: flex; margin-left: 31px; width: 547px; }
.quick span { width: 36px; display: flex; align-items: center; gap: 6px; }
.quick .tight { width: 23px; }
.doc-title { width: 320px; font-size: 11px; letter-spacing: -.15px; color: #333; }
.search { width: 202px; height: 23px; border: 1px solid #111; background: #eceef0; display: flex; align-items: center; font-size: 11.500px; color: #5d6166; padding-left: 5px; white-space: nowrap; }
.search .bubble { width: 17px; height: 17px; margin-right: 4px; }
.search span { width: 135px; letter-spacing: -.25px; }
.search .lens { margin: 0 7px 0 7px; }
.search .down { width: 5px; }
.sysbtns { display: flex; align-items: center; margin-left: 6px; }
.sysbtns svg { width: 14px; height: 14px; margin-left: 9px; }
.sysbtns svg.q { width: 17px; height: 17px; margin: 0 7px 0 0; }

/* ribbon */
.ribbon {
  height: 77px;
  flex: none;
  display: grid;
  grid-template-columns: 76px 71px 42px 64px 66px 65px 7px 74px 3px 57px 61px 3px 48px 3px 57px 3px 59px 50px 3px 61px 63px 3px 61px;
  background: #d7dade;
  border-bottom: 1px solid #141414;
  font-size: 11.500px;
  letter-spacing: -.2px;
  text-align: center;
  white-space: nowrap;
}
.cmd { padding-top: 14px; }
.cmd svg { margin: 0 auto; width: 17px; height: 17px; }
.cmd.drop { padding-top: 7px; position: relative; }
.cmd .down { position: absolute; left: 50%; top: 61px; margin-left: -3px; }
.off { color: #8c8f92; }
.sep { width: 1px; height: 65px; margin: 4px auto 0; background: #1e1e1e; }
.pressed { height: 69px; margin: 2px -1px 0 1px; padding-top: 10px; border: 2px solid #4e5053; border-width: 2px 1px 1px; background: #b3b6b9; }

/* work area */
.work { height: 572px; flex: none; display: grid; grid-template-columns: 189px 1fr; position: relative; }
.cmd-tabs { position: absolute; left: 0; top: -1px; display: grid; grid-template-columns: 68px 57px 56px 60px 131px; z-index: 2; }
.cmd-tabs span { height: 20px; border: solid #151515; border-width: 1px 1px 2px 0; background: #abadaf; text-align: center; font-size: 11.800px; letter-spacing: -.1px; line-height: 17px; white-space: nowrap; }
.cmd-tabs .active { height: 22px; border-width: 0 1px 1px 1px; background: #e1e4e8; font-weight: bold; line-height: 18px; letter-spacing: -.5px; }
.panel { padding-top: 27px; background: #e1e5ea; border-right: 2px solid #131313; display: flex; flex-direction: column; overflow: hidden; white-space: nowrap; }
.panel-tabs { height: 24px; flex: none; display: flex; background: #d9dcdf; }
.panel-tabs span { width: 28px; height: 24px; border: 1px solid #1b1b1b; border-left-width: 0; background: #a9abae; display: flex; align-items: center; justify-content: center; }
.panel-tabs .active { background: #e6e9ed; border-bottom: 0; border-left-width: 1px; }
.panel-tabs b { margin-left: 61px; font: 600 17px/20px "Noto Sans", sans-serif; }
.filter { height: 18px; flex: none; margin: 0 1px; background: #f6f6f6; border: 1px solid #333; display: flex; align-items: center; padding-left: 5px; }
.filter svg { width: 15px; height: 15px; margin-right: 2px; }
.root { display: flex; align-items: center; height: 18px; flex: none; margin-top: 3px; padding-left: 1px; font-size: 11.500px; letter-spacing: -.1px; }
.root svg { margin-right: 4px; }
.tree { list-style: none; margin: 0; padding: 0; flex: none; font-size: 11.500px; letter-spacing: -.1px; background: repeating-linear-gradient(#999 0 1px, transparent 1px 2px) 10px 0 / 1px 190px no-repeat; }
.tree li { height: 18px; display: flex; align-items: center; padding-left: 6px; }
.tree li::before { content: ""; box-sizing: border-box; width: 9px; height: 9px; flex: none; margin-right: 5px; }
.tree li:not(.plus)::before { height: 1px; width: 7px; margin: 0 2px 0 5px; background: repeating-linear-gradient(90deg, #999 0 1px, transparent 1px 2px); }
.tree .plus::before { border: 1px solid #999; background: linear-gradient(#333, #333) center / 5px 1px no-repeat, linear-gradient(#333, #333) center / 1px 5px no-repeat, #f4f4f4; }
.tree svg { margin-right: 4px; }
.rollback { height: 3px; flex: none; background: #466c9f; margin-right: 1px; }
.hscroll { margin-top: auto; height: 17px; flex: none; margin-bottom: 3px; display: flex; align-items: center; background: #efefef; padding: 0 4px; }
.thumb { width: 87px; height: 15px; margin-left: 4px; background: #cbcbcb; }
.chev { width: 6px; height: 6px; border: solid #444; border-width: 2px 0 0 2px; transform: rotate(-45deg); margin-left: 2px; }
.chev.r { margin-left: auto; transform: rotate(135deg); }

.viewport {
  position: relative;
  background:
    radial-gradient(ellipse 620px 330px at 8% 0%, #fff 0, rgba(255,255,255,.92) 55%, rgba(255,255,255,0) 100%),
    radial-gradient(ellipse 150px 200px at 100% 14%, rgba(244,242,247,.9), rgba(244,242,247,0)),
    linear-gradient(#eceef5 0, #e0e3ee 24%, #dcdfea 45%, #dee1eb 54%, #eff0f6 63%, #fafafc 72%, #fefefe 85%, #fff 100%);
}
.scene { width: 1161px; height: 572px; }
.mark { font: 55px "Liberation Serif", serif; fill: #efeff0; stroke: #8d8f95; stroke-width: .6px; filter: drop-shadow(1.200px 1.200px 0 #74767b); }
.mark .han { font: 300 54px "Noto Sans CJK SC", sans-serif; }
.triad text { font: 10px "Noto Sans", sans-serif; }

.hud { position: absolute; left: 372px; top: 2px; display: flex; align-items: center; height: 23px; gap: 5px; }
.hud .on { width: 23px; height: 23px; margin: 0 -2px 0 -3px; background: #97999c; border: 1px solid #444; display: flex; align-items: center; justify-content: center; }
.hud .on + svg { margin-left: 0; }
.hud .down { width: 5px; height: 3px; margin: 0 2px; background: #777; }
.disc { width: 16px; height: 16px; border-radius: 50%; background: radial-gradient(circle at 40% 35%, #b5b5b5, #969696); margin-left: 1px; }
.docbtns { position: absolute; right: 12px; top: 7px; display: flex; gap: 9px; }
.docbtns svg { width: 13px; height: 13px; }
.docbtns .wide { width: 16px; }
.taskpane { position: absolute; right: 0; top: 59px; width: 24px; border: 1px solid #1a1a1a; border-width: 1px 0 0 1px; }
.taskpane span { height: 24px; display: flex; align-items: center; justify-content: center; background: #a9abae; border-bottom: 2px solid #1a1a1a; }
.taskpane .active { background: #f3f4f6; }
.handle { position: absolute; left: -1px; top: 266px; width: 9px; height: 39px; background: #eef0f3; border: 1px solid #151515; border-width: 1px 2px 1px 0; display: flex; flex-direction: column; justify-content: space-around; align-items: center; }
.handle i { width: 3px; height: 5px; background: #222; clip-path: polygon(100% 0, 100% 100%, 0 50%); }

/* sheet tabs and status bar */
.sheet-tabs { height: 16px; flex: none; display: flex; background: #e0e3e7; border-top: 1px solid #151515; border-bottom: 1px solid #151515; }
.nav { width: 68px; padding-left: 2px; display: grid; grid-template-columns: repeat(4, 16px); }
.nav i { font: 9px/12px "DejaVu Sans", sans-serif; color: #878a8d; background: #b9bcbf; border: 1px solid #a1a4a7; text-align: center; }
.sheet-tabs span { height: 14px; border: solid #151515; border-width: 0 1px 1px 0; width: 67px; text-align: center; line-height: 12px; background: #acaeb0; font-size: 11.500px; }
.sheet-tabs span:last-child { width: 105px; padding-right: 6px; }
.sheet-tabs .active { background: #e3e6ea; font-weight: bold; width: 57px; border-left-width: 1px; }
.status { height: 19px; flex: none; display: flex; align-items: center; background: #d7dade; padding-left: 2px; font-size: 11.500px; letter-spacing: -.2px; white-space: nowrap; }
.status > * { flex: none; }
.edition { width: 921px; }
.s-def { width: 94px; }
.s-edit { width: 150px; }
.s-mks { width: 49px; }
.status .qbox { width: 13px; height: 13px; margin: 0 59px 0 20px; border: 1px solid #255b8b; background: #f4fff4; color: #118527; font-size: 12px; line-height: 11px; text-align: center; }
.status .tag { width: 16px; height: 16px; }
.grip { width: 9px; height: 9px; margin-left: 15px; background: radial-gradient(circle, #999 35%, transparent 40%) 0 0 / 3px 3px; clip-path: polygon(100% 0, 100% 100%, 0 100%); }

/* desktop taskbar */
.taskbar {
  position: relative;
  height: 36px;
  flex: none;
  display: flex;
  justify-content: space-between;
  overflow: hidden;
  background: linear-gradient(90deg, #a58b42 0, #a78a43 17%, #a98743 25%, #b58943 29%, #a58542 34%, #95803c 45%, #9a8141 60%, #a57a40 66%, #96843b 72%, #948b36 77%, #a89a35 78.500%, #948b38 80%, #948748 90%, #8c8149 100%);
}
.comb { position: absolute; width: 1362px; height: 36px; }
.apps { position: relative; display: grid; grid-template-columns: repeat(12, 62px); padding-left: 16px; }
.apps span { height: 40px; width: 60px; display: flex; justify-content: center; padding-top: 3px; }
.apps svg { width: 32px; height: 32px; }
.apps .ch { width: 30px; height: 30px; margin-top: 2px; }
.apps .open { border: 1px solid #d1c38e; background: rgba(222, 211, 160, .38); padding-top: 2px; margin-top: 1px; }
.apps .stack { width: 54px; margin-left: 1px; box-shadow: 3px 0 0 -1px #a4915a, 4px 0 0 -1px #d1c38e; }
.apps .bright { background: rgba(240, 232, 200, .55); border-color: #fffbe2; }
.swt { font: bold 17px "Liberation Sans", sans-serif; fill: #fff; }
.swy { font: bold 9.500px "Liberation Sans", sans-serif; fill: #fff; }
.tray { position: relative; display: flex; align-items: center; color: #fff; width: 220px; }
.desk { width: 50px; padding-top: 4px; font-size: 11.500px; letter-spacing: -.2px; }
.more { width: 21px; font-size: 14px; font-weight: bold; height: 26px; }
.tray .up { background: #fff; margin: 6px 14px 0 0; }
.batt { width: 16px; height: 16px; margin: 6px 8px 0 0; }
.sig { width: 16px; height: 16px; margin-top: 4px; }
.clock { margin: 6px 0 0 11px; width: 64px; text-align: center; font-size: 11.500px; line-height: 16px; letter-spacing: -.2px; }
```
